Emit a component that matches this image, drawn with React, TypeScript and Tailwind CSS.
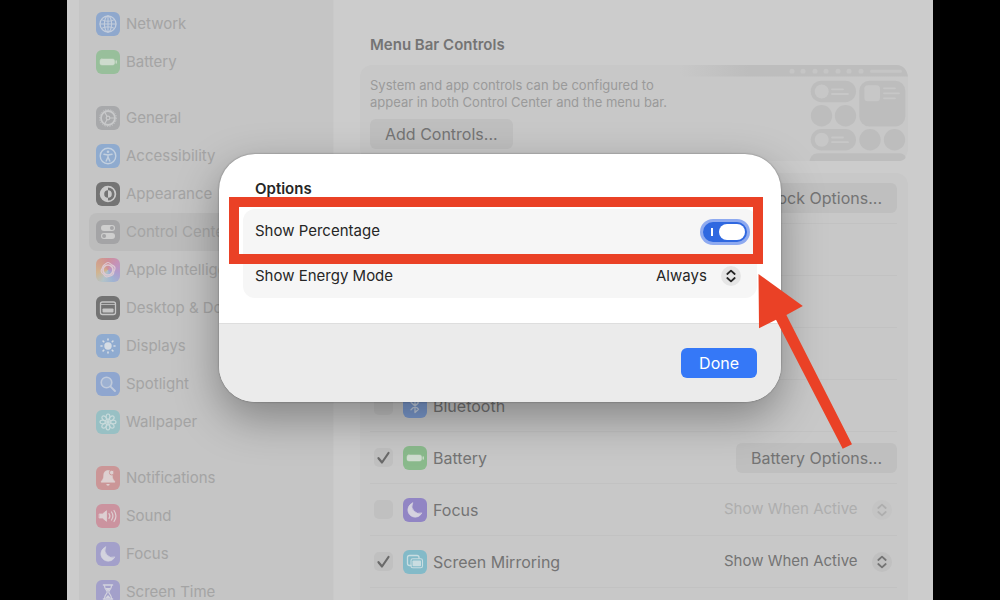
import React, { ReactNode, useState } from "react";

type SidebarItem = {
  label: string;
  tile: string;
  icon: ReactNode;
};

type ControlItem = {
  label: string;
  tile: string;
  icon: ReactNode;
  checked: boolean;
  trailing?: ReactNode;
};

const Glyph: React.FC<{ children: ReactNode }> = ({ children }) => (
  <svg
    viewBox="0 0 24 24"
    className="size-6"
    fill="none"
    stroke="currentColor"
    strokeLinecap="round"
    strokeLinejoin="round"
    aria-hidden="true"
  >
    {children}
  </svg>
);

const GlobeIcon = () => (
  <Glyph>
    <circle cx="12" cy="12" r="8" strokeWidth="1.3" />
    <ellipse cx="12" cy="12" rx="3.6" ry="8" strokeWidth="1.1" />
    <path d="M12 4v16M4 12h16M5.6 7.6c3.6 2.2 9.2 2.2 12.8 0M5.6 16.4c3.6-2.2 9.2-2.2 12.8 0" strokeWidth="1.1" />
  </Glyph>
);

const BatteryIcon = () => (
  <Glyph>
    <rect x="4" y="9" width="14.5" height="6" rx="1.8" fill="currentColor" strokeWidth="0.5" />
    <path d="M20.2 11v2" strokeWidth="1.3" />
  </Glyph>
);

const GearIcon = () => (
  <Glyph>
    <circle cx="12" cy="12" r="7" strokeWidth="1.8" />
    <circle cx="12" cy="12" r="8.4" strokeWidth="1" strokeDasharray="1.2 1.4" strokeLinecap="butt" />
    <circle cx="12" cy="12" r="1.8" strokeWidth="1.2" />
    <path d="M13.8 12H19M11.1 10.5 8.6 6M11.1 13.5 8.6 18" strokeWidth="1.2" />
  </Glyph>
);

const AccessibilityIcon = () => (
  <Glyph>
    <circle cx="12" cy="12" r="7.8" strokeWidth="1.4" />
    <circle cx="12" cy="7.7" r="1.3" fill="currentColor" stroke="none" />
    <path d="M8 10.3l4 .7 4-.7M12 11v2.5M12 13l-1.8 4M12 13l1.8 4" strokeWidth="1.5" />
  </Glyph>
);

const AppearanceIcon = () => (
  <Glyph>
    <circle cx="12" cy="12" r="7.4" strokeWidth="1.7" />
    <path d="M12 4.6a7.4 7.4 0 0 0 0 14.8v-3.6a3.8 3.8 0 0 1 0-7.6z" fill="currentColor" stroke="none" />
    <path d="M12 8.2a3.8 3.8 0 0 1 0 7.6z" fill="currentColor" stroke="none" />
  </Glyph>
);

const SwitchesIcon = () => (
  <Glyph>
    <rect x="5" y="5" width="14" height="6" rx="3" fill="currentColor" stroke="none" />
    <circle cx="15.9" cy="8" r="2" fill="#a4a4a6" stroke="none" />
    <rect x="5" y="13" width="14" height="6" rx="3" fill="currentColor" stroke="none" />
    <circle cx="8.1" cy="16" r="2" fill="#a4a4a6" stroke="none" />
  </Glyph>
);

const IntelligenceIcon = () => (
  <Glyph>
    <circle cx="12" cy="12" r="5" strokeWidth="1.7" />
    <path
      d="M12 4.5c2 0 2.6 2 4.2 2.6s3 1.4 2.8 3.4-1.4 2.6-1.3 4-1.4 3.3-3.2 3.400-2.800 1.500-4.500.8-1.800-2.300-3.300-3.200-2-2.900-1-4.300.7-2.900 2.100-4 2.900-2.700 4.200-2.700z"
      strokeWidth="1.2"
    />
  </Glyph>
);

const DockIcon = () => (
  <Glyph>
    <rect x="4.5" y="6" width="15" height="12.5" rx="2" strokeWidth="1.3" />
    <rect x="6.5" y="12.5" width="11" height="4" rx="0.8" fill="currentColor" stroke="none" />
    <path d="M5 8.5h14" strokeWidth="0.8" />
  </Glyph>
);

const SunIcon = () => (
  <Glyph>
    <circle cx="12" cy="12" r="3.7" fill="currentColor" stroke="none" />
    <path
      d="M12 5v1M12 18v1M5 12h1M18 12h1M7.1 7.1l.7.7M16.2 16.2l.7.7M7.1 16.9l.7-.7M16.2 7.8l.7-.7"
      strokeWidth="1.6"
    />
  </Glyph>
);

const SearchIcon = () => (
  <Glyph>
    <circle cx="10.5" cy="10.5" r="5.3" strokeWidth="1.6" fill="currentColor" fillOpacity="0.3" />
    <path d="M14.6 14.6l4.4 4.4" strokeWidth="1.9" />
  </Glyph>
);

const FlowerIcon = () => (
  <Glyph>
    {[0, 45, 90, 135, 180, 225, 270, 315].map((angle) => (
      <ellipse
        key={angle}
        cx="12"
        cy="6.7"
        rx="1.9"
        ry="2.7"
        strokeWidth="1.2"
        transform={`rotate(${angle} 12 12)`}
      />
    ))}
    <circle cx="12" cy="12" r="1.9" fill="currentColor" stroke="none" />
  </Glyph>
);

const BellIcon = () => (
  <Glyph>
    <path
      d="M12 4.5c-2.9 0-4.3 2-4.3 4.5 0 3.7-1 5-2.5 6.3v1h13.6v-1c-1.5-1.3-2.5-2.6-2.5-6.3 0-2.5-1.4-4.5-4.3-4.5z"
      fill="currentColor"
      strokeWidth="0.5"
    />
    <path d="M10.3 18h3.4a1.7 1.7 0 0 1-3.4 0z" fill="currentColor" stroke="none" />
    <circle cx="15.8" cy="6.6" r="2.4" fill="currentColor" stroke="#cb9697" strokeWidth="0.9" />
  </Glyph>
);

const SpeakerIcon = () => (
  <Glyph>
    <path d="M3.5 10h3l4-3.3v10.6l-4-3.3h-3z" fill="currentColor" strokeWidth="0.8" />
    <path d="M13 9.6a4 4 0 0 1 0 4.8M15.5 8a6.8 6.8 0 0 1 0 8M18 6.500a9.500 9.500 0 0 1 0 11" strokeWidth="1.2" />
  </Glyph>
);

const MoonIcon = () => (
  <Glyph>
    <path d="M9.6 5a7.3 7.3 0 1 0 9.2 9.9A7.300 7.300 0 0 1 9.600 5z" fill="currentColor" strokeWidth="0.7" />
  </Glyph>
);

const HourglassIcon = () => (
  <Glyph>
    <path d="M7.5 5h9M7.5 19h9" strokeWidth="1.6" />
    <path
      d="M8.5 5.5c0 4 2.700 4.500 2.700 6.500s-2.700 2.500-2.700 6.500M15.500 5.500c0 4-2.700 4.500-2.700 6.500s2.700 2.500 2.700 6.500"
      strokeWidth="1.2"
    />
    <path d="M9.300 8h5.400L12 11.500zM9.200 18l2.800-3 2.800 3z" fill="currentColor" stroke="none" />
  </Glyph>
);

const BluetoothIcon = () => (
  <Glyph>
    <path d="M8 8.300l7.500 7L12 18.500v-13l3.500 3.200-7.500 7" strokeWidth="1.3" />
  </Glyph>
);

const MirroringIcon = () => (
  <Glyph>
    <path d="M8 15.500H6.500a2 2 0 0 1-2-2v-6a2 2 0 0 1 2-2H14a2 2 0 0 1 2 2v.7" strokeWidth="1.3" />
    <rect x="8" y="8.800" width="11.500" height="9" rx="1.800" strokeWidth="1.1" />
    <rect x="9.500" y="10.500" width="8.500" height="5.800" rx="0.800" fill="currentColor" stroke="none" />
  </Glyph>
);

const sidebarGroups: SidebarItem[][] = [
  [
    { label: "Network", tile: "bg-[#8fa8cd] text-[#c3cddc]", icon: <GlobeIcon /> },
    { label: "Battery", tile: "bg-[#98bf9b] text-[#cddbcd]", icon: <BatteryIcon /> },
  ],
  [
    { label: "General", tile: "bg-[#a8a9ab] text-[#c8c9ca]", icon: <GearIcon /> },
    { label: "Accessibility", tile: "bg-[#8fabcf] text-[#c3d0df]", icon: <AccessibilityIcon /> },
    { label: "Appearance", tile: "bg-[#747474] text-[#cacaca]", icon: <AppearanceIcon /> },
    { label: "Control Center", tile: "bg-[#a4a4a6] text-[#cecece]", icon: <SwitchesIcon /> },
    {
      label: "Apple Intelligence & Siri",
      tile: "bg-[conic-gradient(from_0deg,#cf8f98,#c592b8,#b09ccc,#9fb3d2,#b3c3c8,#d1b48f,#d1a08d,#cf8f98)] text-[#dcc9d2]",
      icon: <IntelligenceIcon />,
    },
    { label: "Desktop & Dock", tile: "bg-[#737373] text-[#c6c6c6]", icon: <DockIcon /> },
    { label: "Displays", tile: "bg-[#8fabd0] text-[#d5dce4]", icon: <SunIcon /> },
    { label: "Spotlight", tile: "bg-[#8fa6cf] text-[#c0cadb]", icon: <SearchIcon /> },
    { label: "Wallpaper", tile: "bg-[#98c0c4] text-[#c8dadb]", icon: <FlowerIcon /> },
  ],
  [
    { label: "Notifications", tile: "bg-[#cb9697] text-[#ddd0d0]", icon: <BellIcon /> },
    { label: "Sound", tile: "bg-[#cb939f] text-[#ddcfd2]", icon: <SpeakerIcon /> },
    { label: "Focus", tile: "bg-[#a3a0ca] text-[#d3d3de]", icon: <MoonIcon /> },
    { label: "Screen Time", tile: "bg-[#a3a0ca] text-[#d3d3de]", icon: <HourglassIcon /> },
  ],
];

const IconTile: React.FC<{ tile: string; children: ReactNode }> = ({ tile, children }) => (
  <span className={`block size-6 shrink-0 rounded-md ${tile}`}>{children}</span>
);

const Sidebar = () => (
  <nav className="ml-3 flex w-[254px] shrink-0 flex-col gap-[18px] bg-[#c5c5c5] px-2.5 pt-[5px] text-[15px]">
    {sidebarGroups.map((group, index) => (
      <ul key={index}>
        {group.map((item) => (
          <li key={item.label}>
            <a
              href="#"
              aria-current={item.label === "Control Center" ? "page" : undefined}
              className="flex h-[38px] items-center gap-1.5 rounded-lg px-[7px] whitespace-nowrap text-[#a4a4a4] aria-[current=page]:bg-[#bcbcbc]"
            >
              <IconTile tile={item.tile}>{item.icon}</IconTile>
              {item.label}
            </a>
          </li>
        ))}
      </ul>
    ))}
  </nav>
);

const PushButton: React.FC<{ children: ReactNode }> = ({ children }) => (
  <button
    type="button"
    className="h-[30px] shrink-0 rounded-md bg-[#bfbfbf] px-[15px] text-base leading-[30px] whitespace-nowrap text-[#747474]"
  >
    {children}
  </button>
);

type PopUpProps = {
  label: string;
  value: string;
  tone: string;
  disc: string;
  disabled?: boolean;
};

const PopUp: React.FC<PopUpProps> = ({ label, value, tone, disc, disabled }) => (
  <span className={`relative flex items-center text-[15px] ${tone}`}>
    <select
      aria-label={label}
      disabled={disabled}
      className="appearance-none bg-transparent pr-[34px] opacity-100 outline-none"
    >
      <option>{value}</option>
    </select>
    <span className={`pointer-events-none absolute right-0 size-5 rounded-full ${disc}`}>
      <svg
        viewBox="0 0 20 20"
        className="size-5"
        fill="none"
        stroke="currentColor"
        strokeWidth="1.8"
        strokeLinecap="round"
        strokeLinejoin="round"
        aria-hidden="true"
      >
        <path d="M6.300 8 10 4.600 13.700 8M6.300 12l3.700 3.400 3.700-3.400" />
      </svg>
    </span>
  </span>
);

const MenuBarArt = () => (
  <svg viewBox="0 0 228 96" className="h-24 w-[228px] shrink-0" aria-hidden="true">
    <defs>
      <linearGradient id="bar-fade">
        <stop offset="0" stopColor="#bdbdbd" stopOpacity="0" />
        <stop offset="0.3" stopColor="#bdbdbd" />
      </linearGradient>
    </defs>
    <path d="M0 0h217c6 0 10 5 11 11.500H0z" fill="url(#bar-fade)" />
    <g fill="#c5c5c5">
      {[112, 123, 135, 146, 158, 169, 181].map((x) => (
        <circle key={x} cx={x} cy="6.300" r="2.500" />
      ))}
      <rect x="190" y="4.800" width="32" height="3" rx="1.500" />
    </g>
    <g fill="#bdbdbd">
      <rect x="130.700" y="15.700" width="45.300" height="21.500" rx="10.700" />
      <rect x="179.300" y="15.700" width="46" height="45.700" rx="10" />
      <circle cx="141.500" cy="50.700" r="10.700" />
      <circle cx="165.500" cy="50.700" r="10.700" />
      <rect x="130.700" y="64" width="45.300" height="21.500" rx="10.700" />
      <circle cx="190" cy="74.700" r="10.700" />
      <circle cx="214.500" cy="74.700" r="10.700" />
      <path d="M129.500 96c1-5 4-7.700 9-7.700h80c4 0 7 2 7 4s-3 3.700-7 3.700z" />
    </g>
    <g fill="#c7c7c7">
      <circle cx="141.700" cy="26.500" r="7" />
      <circle cx="141.700" cy="74.700" r="7" />
      <rect x="184.300" y="20.300" width="15.700" height="16" rx="3.500" />
    </g>
    <path
      d="M152 24.300h11M152 29h16M152 72.500h11M152 77.200h16M204 23.300h11M204 28.300h15M204 33.300h11"
      stroke="#c7c7c7"
      strokeWidth="1.800"
      strokeLinecap="round"
    />
  </svg>
);

const controls: ControlItem[] = [
  { label: "Bluetooth", tile: "bg-[#7c9bd0] text-[#c5d1e2]", icon: <BluetoothIcon />, checked: false },
  {
    label: "Battery",
    tile: "bg-[#8aba8c] text-[#d0ddd0]",
    icon: <BatteryIcon />,
    checked: true,
    trailing: <PushButton>Battery Options...</PushButton>,
  },
  {
    label: "Focus",
    tile: "bg-[#9185c4] text-[#d5d2df]",
    icon: <MoonIcon />,
    checked: false,
    trailing: (
      <span className="mr-[5px]">
        <PopUp label="Focus visibility" value="Show When Active" tone="text-[#aeaeae]" disc="bg-[#c4c4c4]" disabled />
      </span>
    ),
  },
  {
    label: "Screen Mirroring",
    tile: "bg-[#83bac8] text-[#c9dde1]",
    icon: <MirroringIcon />,
    checked: true,
    trailing: (
      <span className="mr-[5px]">
        <PopUp label="Screen Mirroring visibility" value="Show When Active" tone="text-[#747474]" disc="bg-[#c0c0c0]" />
      </span>
    ),
  },
];

const ControlRow: React.FC<{ item: ControlItem }> = ({ item }) => (
  <li className="flex h-[52px] items-center justify-between border-b border-[#c2c2c2]">
    <label className="flex items-center pl-1">
      <span className="relative mr-2.5 size-[19px]">
        <input
          type="checkbox"
          defaultChecked={item.checked}
          className="peer block size-[19px] appearance-none rounded-[5px] bg-[#c0c0c0]"
        />
        <svg
          viewBox="0 0 19 19"
          className="pointer-events-none absolute inset-0 hidden size-[19px] peer-checked:block"
          fill="none"
          stroke="#6a6a6a"
          strokeWidth="2.2"
          strokeLinecap="round"
          strokeLinejoin="round"
          aria-hidden="true"
        >
          <path d="M4.500 10.200l3.500 4.300 6.500-9.500" />
        </svg>
      </span>
      <IconTile tile={item.tile}>{item.icon}</IconTile>
      <span className="ml-1.5">{item.label}</span>
    </label>
    {item.trailing}
  </li>
);

const ControlsPane = () => (
  <main className="min-w-0 flex-1 border-l border-[#c9c9c9] pr-[25px] pl-[26px] text-[#747474]">
    <h2 className="mt-[33px] pl-2.5 text-[15px] leading-6 font-semibold">Menu Bar Controls</h2>
    <section className="mt-2 flex justify-between rounded-xl bg-[#c8c8c8] pl-2.5">
      <div className="pt-3">
        <p className="text-[13px] leading-[17px] whitespace-nowrap text-[#9a9a9a]">
          System and app controls can be configured to
          <br />
          appear in both Control Center and the menu bar.
        </p>
        <div className="mt-2">
          <PushButton>Add Controls...</PushButton>
        </div>
      </div>
      <MenuBarArt />
    </section>
    <ul className="mt-3 rounded-t-xl bg-[#c8c8c8] pr-[11px] pb-6 pl-2.5">
      <li className="flex h-[51px] items-center justify-end border-b border-[#c2c2c2]">
        <PushButton>Clock Options...</PushButton>
      </li>
      <li className="h-[52px] border-b border-[#c2c2c2]" />
      <li className="h-[52px] border-b border-[#c2c2c2]" />
      <li className="h-[52px] border-b border-[#c2c2c2]" />
      {controls.map((item) => (
        <ControlRow key={item.label} item={item} />
      ))}
    </ul>
  </main>
);

const Arrow = () => (
  <svg
    viewBox="0 0 96 176"
    className="pointer-events-none absolute top-[119px] left-[538px] h-44 w-24"
    fill="#ea4126"
    aria-hidden="true"
  >
    <path d="M1.500 1 45.800 33 29.400 42 95 171.300 85.700 175.800 19 46.800 2 55.300z" />
  </svg>
);

const OptionsDialog = () => {
  const [showPercentage, setShowPercentage] = useState(true);

  return (
    <div
      role="dialog"
      aria-labelledby="options-title"
      className="absolute top-[154px] left-1/2 w-[562px] -translate-x-1/2 rounded-[36px] bg-white text-[15px] text-[#262626] shadow-[0_16px_44px_rgba(0,0,0,0.34),0_0_2px_rgba(0,0,0,0.4)]"
    >
      <div className="px-6 pt-[23px] pb-[25px]">
        <h1 id="options-title" className="pl-3 leading-6 font-semibold">
          Options
        </h1>
        <div className="mt-2 rounded-xl bg-[#f6f6f6]">
          <div className="relative flex h-[45px] items-center justify-between pr-2.5 pl-3">
            <label htmlFor="show-percentage">Show Percentage</label>
            <input
              id="show-percentage"
              type="checkbox"
              role="switch"
              checked={showPercentage}
              onChange={(event) => setShowPercentage(event.target.checked)}
              className="relative h-5 w-11 appearance-none rounded-full bg-[#c4c4c4] ring-3 ring-[#8eaaf0] before:absolute before:top-1.5 before:left-2 before:h-2 before:w-0.5 before:bg-white after:absolute after:top-0.5 after:left-0.5 after:h-4 after:w-[26px] after:rounded-full after:bg-white checked:bg-[#2f68e0] checked:after:left-4"
            />
            <div className="pointer-events-none absolute -top-3 -right-1.5 -bottom-2.5 -left-3.5 border-10 border-[#ea4126]" />
          </div>
          <div className="flex h-11 items-center justify-between pr-4 pl-3">
            <span>Show Energy Mode</span>
            <PopUp label="Show Energy Mode" value="Always" tone="text-[#262626]" disc="bg-[#e5e5e5]" />
          </div>
        </div>
      </div>
      <div className="flex justify-end rounded-b-[36px] border-t border-[#dedede] bg-[#ebebeb] px-6 py-6">
        <button type="button" className="h-[30px] rounded-md bg-[#3578f7] px-[18px] text-base text-white">
          Done
        </button>
      </div>
      <Arrow />
    </div>
  );
};

export default function App() {
  return (
    <div className="relative h-screen overflow-hidden bg-black px-[67px] font-['Inter','Liberation_Sans',sans-serif] text-base">
      <div className="flex h-full overflow-hidden bg-[#cccccc]">
        <Sidebar />
        <ControlsPane />
      </div>
      <OptionsDialog />
    </div>
  );
}
